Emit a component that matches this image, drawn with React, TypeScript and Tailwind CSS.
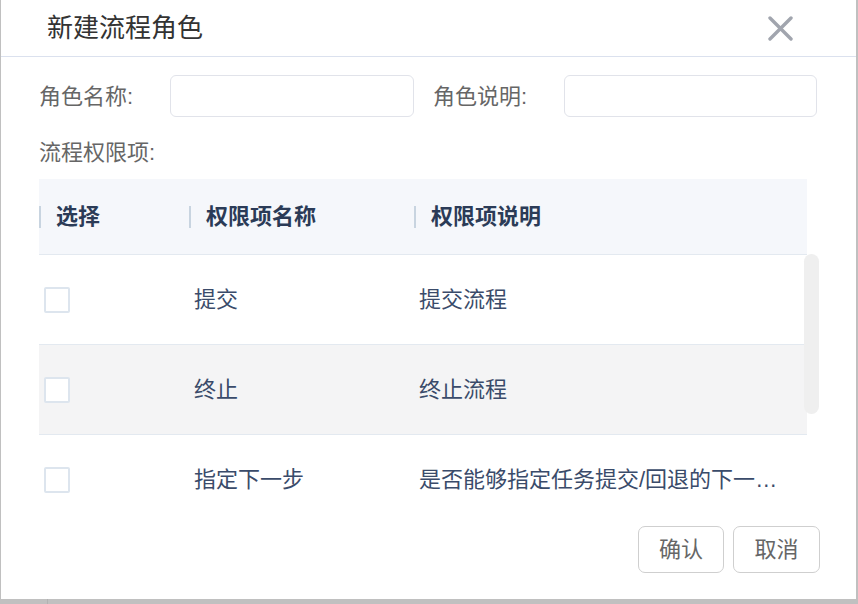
import React from "react";

const rows = [
  { name: "提交", desc: "提交流程", bg: "bg-white" },
  { name: "终止", desc: "终止流程", bg: "bg-[#f4f4f5]" },
  { name: "指定下一步", desc: "是否能够指定任务提交/回退的下一步处理人", bg: "bg-white" },
];

const font = { fontFamily: '"Liberation Sans", "Noto Sans CJK SC", sans-serif' };

export default function App() {
  return (
    <div className="relative h-[604px] w-[858px] overflow-hidden bg-[#c0c0c0]" style={font}>
      <div className="absolute bottom-0 left-[47px] h-[5px] w-px bg-[#b2b2b2]" />
      <div className="ml-px flex h-[599px] w-[855px] flex-col bg-white">
        {/* header */}
        <div className="flex h-[57px] shrink-0 items-center justify-between border-b border-[#dbe1ee] pl-[46px] pr-[63px]">
          <span className="text-[26px] leading-none text-[#333]">新建流程角色</span>
          <svg width="25" height="25" viewBox="0 0 25 25" className="text-[#a1a5ae]">
            <path d="M2 2 L23 23 M23 2 L2 23" stroke="currentColor" strokeWidth="3.4" strokeLinecap="round" />
          </svg>
        </div>

        <div className="pl-[38px]">
          {/* form row */}
          <div className="mt-[18px] flex h-[42px] items-center">
            <span className="w-[131px] text-[22px] text-[#666]">角色名称:</span>
            <input className="h-[42px] w-[244px] rounded-[6px] border border-[#e1e3ea] outline-none" />
            <span className="ml-[19px] w-[131px] text-[22px] text-[#666]">角色说明:</span>
            <input className="h-[42px] w-[253px] rounded-[6px] border border-[#e1e3ea] outline-none" />
          </div>

          <div className="mt-[21px] h-[30px] text-[22px] leading-[30px] text-[#666]">流程权限项:</div>

          {/* table */}
          <div className="relative mt-[11px] w-[768px]">
            <div className="flex h-[76px] items-center border-b border-[#e3e9f0] bg-[#f5f7fb] text-[22px] font-bold text-[#2b3b57]">
              <HeadCell className="w-[150px]">选择</HeadCell>
              <HeadCell className="w-[225px]">权限项名称</HeadCell>
              <HeadCell className="flex-1">权限项说明</HeadCell>
            </div>
            <div className="h-[260px] overflow-hidden">
              {rows.map((r) => (
                <div
                  key={r.name}
                  className={`flex h-[90px] items-center border-b border-[#e3e9f0] text-[22px] text-[#3a4b6a] ${r.bg}`}
                >
                  <div className="w-[150px] pl-[5px]">
                    <div className="h-[26px] w-[26px] rounded-[2px] border-2 border-[#dde5ee] bg-white" />
                  </div>
                  <div className="w-[225px] pl-[5px]">{r.name}</div>
                  <div className="min-w-0 flex-1 truncate pl-[5px] pr-[18px]">{r.desc}</div>
                </div>
              ))}
            </div>
            <div className="absolute left-[765px] top-[75px] h-[160px] w-[15px] rounded-full bg-[#efefef]" />
          </div>
        </div>

        {/* footer */}
        <div className="mt-[11px] flex justify-end gap-[9px] pr-[36px]">
          <button className="h-[47px] w-[86px] rounded-[7px] border border-[#cfcfcf] bg-white text-[22px] text-[#666]">
            确认
          </button>
          <button className="h-[47px] w-[87px] rounded-[7px] border border-[#cfcfcf] bg-white text-[22px] text-[#666]">
            取消
          </button>
        </div>
      </div>
    </div>
  );
}

function HeadCell({ className, children }: { className: string; children: React.ReactNode }) {
  return (
    <div className={`flex items-center ${className}`}>
      <span className="h-[22px] w-[2px] bg-[#c8d4e0]" />
      <span className="pl-[15px]">{children}</span>
    </div>
  );
}
